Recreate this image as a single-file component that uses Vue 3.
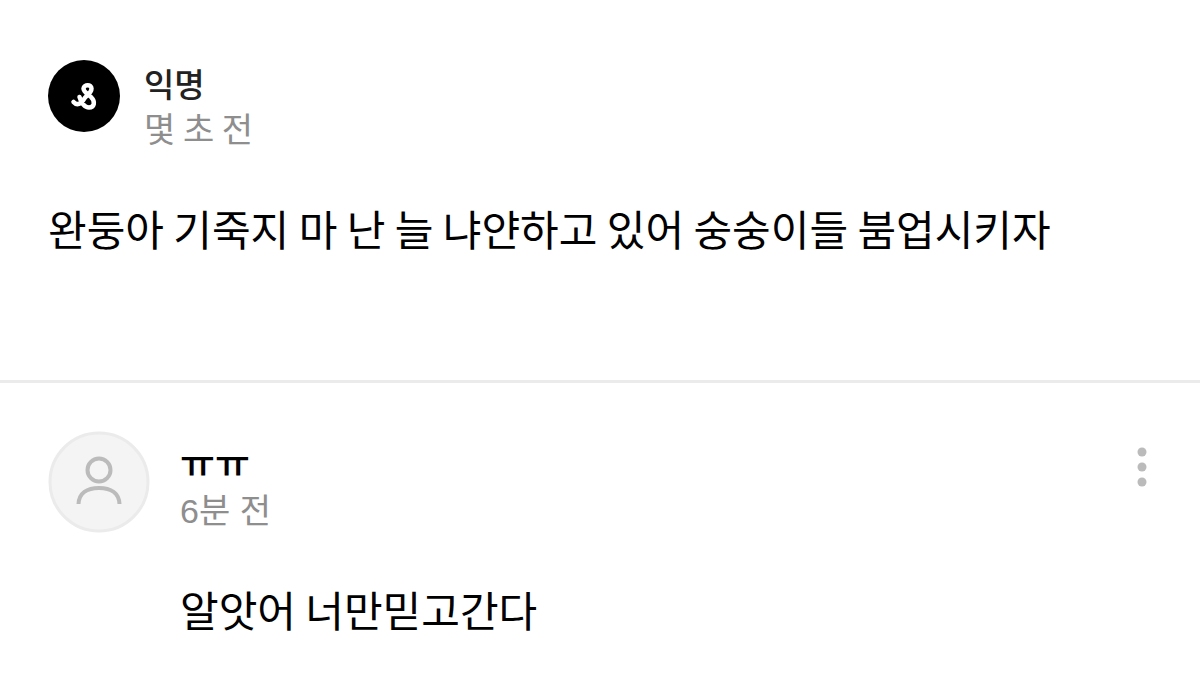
<script setup>
const post = { author: '익명', time: '몇 초 전', body: '완둥아 기죽지 마 난 늘 냐얀하고 있어 숭숭이들 붐업시키자' }
const comment = { author: 'ㅠㅠ', time: '6분 전', body: '알앗어 너만믿고간다' }
</script>

<template>
  <main class="page">
    <article class="post">
      <header class="head">
        <svg class="logo" viewBox="0 0 72 72" role="img" aria-label="익명">
          <circle cx="36" cy="36" r="36" fill="#000" />
          <g fill="none" stroke="#fff" stroke-width="4.5" stroke-linecap="round" stroke-linejoin="round">
            <path d="M25.500 42 C29 46 33 44 36 39 C39 35 43.500 33 43.500 28.500 C43.500 24 36 24 35.500 28.500 C35.500 32 40 34 43 37 C48 42 46 47.500 41 47.500 C37 47.500 33 43 31.500 37" />
          </g>
        </svg>
        <div>
          <h1 class="name">{{ post.author }}</h1>
          <p class="time">{{ post.time }}</p>
        </div>
      </header>
      <p class="text">{{ post.body }}</p>
    </article>
    <article class="comment">
      <svg class="avatar" viewBox="0 0 102 102" aria-hidden="true">
        <circle cx="51" cy="51" r="49" fill="#f4f4f4" stroke="#ebebeb" stroke-width="3" />
        <g fill="none" stroke="#bbb" stroke-width="4">
          <circle cx="51" cy="39" r="11.500" />
          <path d="M30.500 73 C31 62 39 57 51 57 S71 62 71.500 73" />
        </g>
      </svg>
      <div class="content">
        <h2 class="name">{{ comment.author }}</h2>
        <p class="time">{{ comment.time }}</p>
        <p class="text">{{ comment.body }}</p>
      </div>
      <button class="more" type="button" aria-label="더보기">
        <svg viewBox="0 0 12 40" aria-hidden="true">
          <g fill="#bbb"><circle cx="6" cy="5" r="4.500" /><circle cx="6" cy="20" r="4.500" /><circle cx="6" cy="35" r="4.500" /></g>
        </svg>
      </button>
    </article>
  </main>
</template>

<style>
body { margin: 0; background: #fff; }
</style>

<style scoped>
.page { font-family: "Noto Sans CJK KR", sans-serif; color: #000; }
h1, h2, p { margin: 0; }
.post { padding: 60px 48px 122px; border-bottom: 3px solid #ebebeb; }
.head { display: flex; gap: 24px; }
.logo { width: 72px; height: 72px; flex: none; }
.name { font-size: 33px; line-height: 46px; font-weight: 500; color: #222; }
.time { font-size: 34px; line-height: 44px; color: #8e8e8e; }
.text { font-size: 42px; line-height: 60px; }
.head + .text { margin-top: 48px; }
.comment { display: flex; gap: 30px; padding: 48px 48px 32px; }
.avatar { width: 102px; height: 102px; flex: none; }
.content { flex: 1; padding-top: 6px; }
.content .name { font-size: 38px; line-height: 48px; color: #000; }
.content .time { margin-top: 4px; font-family: "Liberation Sans", "Noto Sans CJK KR", sans-serif; }
.content .text { margin-top: 46px; }
.more { align-self: flex-start; margin-top: 16px; padding: 0 4px; border: 0; background: none; }
.more svg { display: block; width: 12px; height: 40px; }
</style>
